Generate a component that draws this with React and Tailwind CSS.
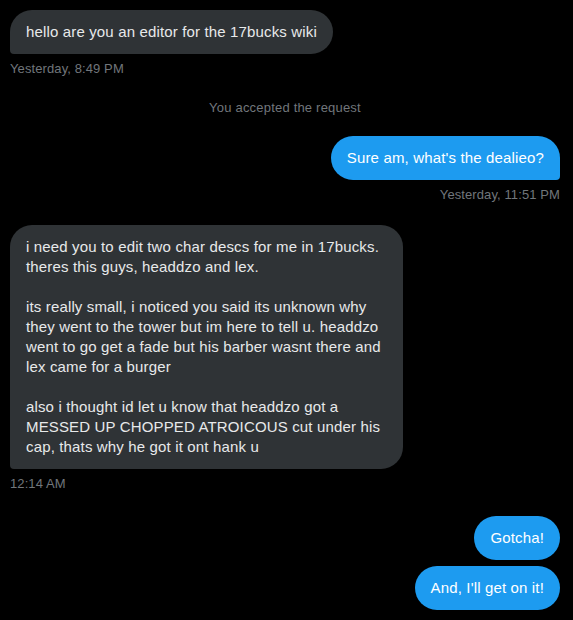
import React from 'react';

const font = { fontFamily: '"Liberation Sans", Arial, sans-serif' };

function Received({ children, width }) {
  return (
    <div className="flex justify-start">
      <div className={`bg-[#2f3336] text-[#e7e9ea] text-[15px] leading-5 tracking-[0.15px] px-4 py-3 rounded-[22px] rounded-bl-[4px] whitespace-pre ${width || ''}`}>
        {children}
      </div>
    </div>
  );
}

function Sent({ children, tail = true }) {
  return (
    <div className="flex justify-end">
      <div className={`bg-[#1d9bf0] text-white text-[15px] leading-5 tracking-[0.15px] px-4 py-3 rounded-[22px] whitespace-pre ${tail ? 'rounded-br-[4px]' : ''}`}>
        {children}
      </div>
    </div>
  );
}

function Stamp({ children, right }) {
  return (
    <div className={`mt-[7px] text-[13px] leading-4 tracking-[0.1px] text-[#71767b] ${right ? 'text-right' : ''}`}>
      {children}
    </div>
  );
}

export default function App() {
  const longMsg = [
    'i need you to edit two char descs for me in 17bucks.',
    'theres this guys, headdzo and lex.',
    '',
    'its really small, i noticed you said its unknown why',
    'they went to the tower but im here to tell u. headdzo',
    'went to go get a fade but his barber wasnt there and',
    'lex came for a burger',
    '',
    'also i thought id let u know that headdzo got a',
    'MESSED UP CHOPPED ATROICOUS cut under his',
    "cap, thats why he got it ont hank u",
  ].join('\n');

  return (
    <div className="min-h-[620px] w-full bg-black pl-[10px] pr-[13px] pt-[10px]" style={font}>
      <Received>hello are you an editor for the 17bucks wiki</Received>
      <Stamp>Yesterday, 8:49 PM</Stamp>

      <div className="mt-[23px] text-center text-[13px] leading-4 tracking-[0.2px] text-[#71767b]">
        You accepted the request
      </div>

      <div className="mt-5">
        <Sent>Sure am, what's the dealieo?</Sent>
      </div>
      <Stamp right>Yesterday, 11:51 PM</Stamp>

      <div className="mt-[22px]">
        <Received width="w-[393px]">{longMsg}</Received>
      </div>
      <Stamp>12:14 AM</Stamp>

      <div className="mt-6 flex flex-col gap-[6px]">
        <Sent tail={false}>Gotcha!</Sent>
        <Sent tail={false}>And, I'll get on it!</Sent>
      </div>
    </div>
  );
}
